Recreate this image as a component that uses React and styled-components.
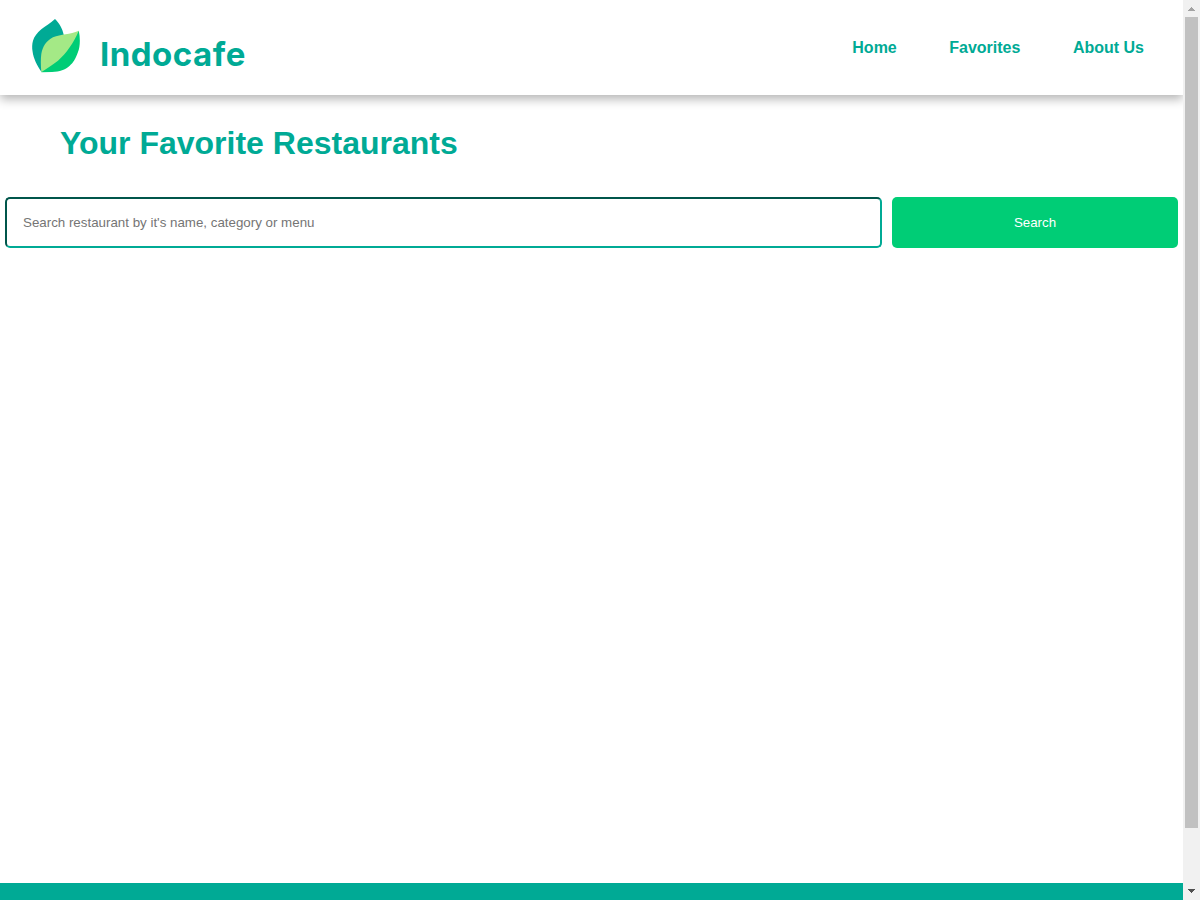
import React from 'react';
import styled, { createGlobalStyle } from 'styled-components';

const GlobalStyle = createGlobalStyle`
  * { box-sizing: border-box; }
  body { margin: 0; background: #fff; font-family: "Liberation Sans", Arial, sans-serif; overflow: hidden; }
`;

const Screen = styled.div`
  display: flex;
  width: 100%;
  height: 100vh;
`;

const Page = styled.div`
  flex: 1;
  min-width: 0;
  display: flex;
  flex-direction: column;
  overflow: hidden;
`;

const Header = styled.header`
  flex: none;
  height: 95px;
  display: flex;
  justify-content: space-between;
  background: #fff;
  box-shadow: 0 4px 10px 0 rgba(0, 0, 0, 0.3);
  padding: 0 39px 0 32px;
`;

const Brand = styled.a`
  display: flex;
  gap: 20px;
  padding-top: 19px;
`;

const Leaf = styled.svg`
  display: block;
  width: 48px;
  height: 54px;
`;

const BrandName = styled.span`
  font: 650 33px/40px Inter, "Open Sans", sans-serif;
  letter-spacing: 0.5px;
  color: #00aa95;
  padding-top: 15px;
`;

const Nav = styled.nav`
  display: flex;
  gap: 52.5px;
  align-items: center;
`;

const NavLink = styled.a`
  font-size: 16px;
  font-weight: 700;
  line-height: 18px;
  color: #00aa95;
`;

const Main = styled.main`
  flex: 1;
`;

const Title = styled.h1`
  margin: 0;
  padding: 30px 60px 0;
  font-size: 32px;
  line-height: 37px;
  color: #00aa95;
`;

const SearchForm = styled.form`
  display: flex;
  gap: 10px;
  padding: 35px 5px 0;
`;

const SearchInput = styled.input`
  flex: 1;
  min-width: 0;
  height: 51px;
  padding: 0 16px;
  border: 2px inset #00aa95;
  border-radius: 5px;
  background: #fff;
  font: 13.333px "Liberation Sans", Arial, sans-serif;
  &::placeholder { color: #757575; }
`;

const SearchButton = styled.button`
  width: 286px;
  height: 51px;
  border: 0;
  border-radius: 5px;
  background: #00cd76;
  color: #fff;
  font: 13.333px "Liberation Sans", Arial, sans-serif;
`;

const Footer = styled.footer`
  flex: none;
  height: 17px;
  background: #00aa95;
`;

const Scrollbar = styled.div`
  width: 17px;
  display: flex;
  flex-direction: column;
  background: #f1f1f1;
`;

const ScrollArrow = styled.svg`
  flex: none;
  width: 17px;
  height: 17px;
`;

const ScrollTrack = styled.div`
  flex: 1;
  padding: 0 2px;
`;

const ScrollThumb = styled.div`
  height: 811px;
  background: #c1c1c1;
`;

const links = ['Home', 'Favorites', 'About Us'];

export default function App() {
  return (
    <Screen>
      <GlobalStyle />
      <Page>
        <Header>
          <Brand>
            <Leaf viewBox="0 0 48 54">
              <path d="M23 0C27 4 30.5 9 32 17L9.5 53C5 46 1.500 40 0.500 32C0 29 0 25 1 21.700C2 18 5 14 9.300 10.300C14 6.500 18 4.500 23 0Z" fill="#00aa95" />
              <path d="M46.8 11.7C48.500 20 48 28 46 33C43.500 40 41 44 37.700 46.700C33 51 28 52.500 20 53L9.300 53.300Z" fill="#00cd76" />
              <path d="M46.8 11.7C44 18 41 24 37.700 28.300C34 34 30 38 26 41.700C20 46.500 14 50 9.300 53C8.800 46 8.600 40 9.300 35C10.500 28 14 22 21 18.300C29 14.800 38 16 46.800 11.700Z" fill="#a4e986" />
            </Leaf>
            <BrandName>Indocafe</BrandName>
          </Brand>
          <Nav>
            {links.map((label) => <NavLink key={label}>{label}</NavLink>)}
          </Nav>
        </Header>
        <Main>
          <Title>Your Favorite Restaurants</Title>
          <SearchForm>
            <SearchInput placeholder="Search restaurant by it's name, category or menu" />
            <SearchButton type="button">Search</SearchButton>
          </SearchForm>
        </Main>
        <Footer />
      </Page>
      <Scrollbar>
        <ScrollArrow viewBox="0 0 17 17" shapeRendering="crispEdges">
          <path d="M8 7h1v1h1v1h1v1h1v1H5v-1h1V9h1V8h1z" fill="#a3a3a3" />
        </ScrollArrow>
        <ScrollTrack><ScrollThumb /></ScrollTrack>
        <ScrollArrow viewBox="0 0 17 17" shapeRendering="crispEdges">
          <path d="M5 6h7v1h-1v1h-1v1H9v1H8V9H7V8H6V7H5z" fill="#505050" />
        </ScrollArrow>
      </Scrollbar>
    </Screen>
  );
}
